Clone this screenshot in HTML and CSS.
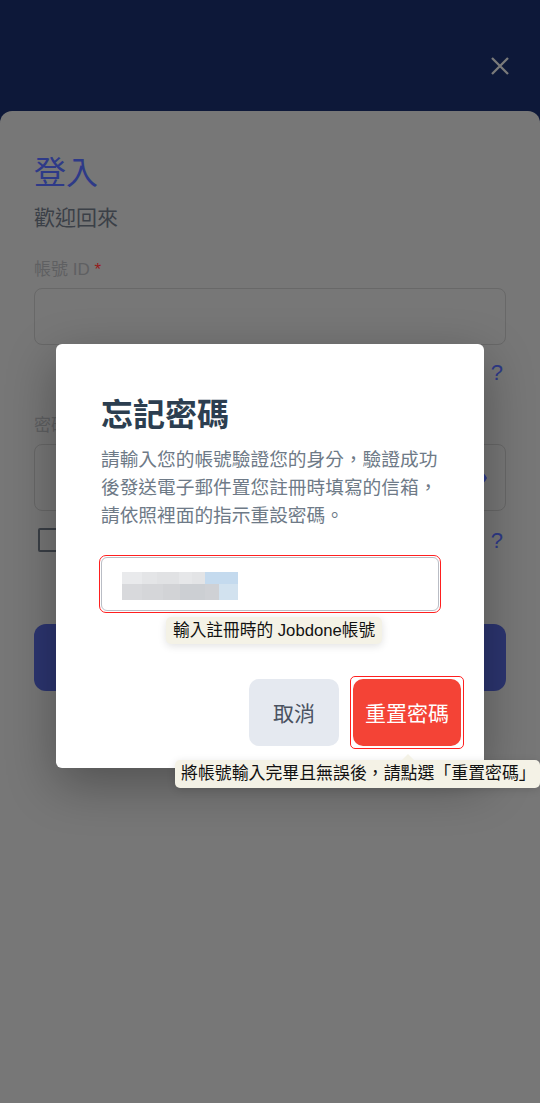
FILE: index.html
```html
<!DOCTYPE html>
<html lang="zh-Hant">
<head>
<meta charset="utf-8">
<title>登入</title>
<link rel="stylesheet" href="styles.css">
</head>
<body>
<div class="page">
  <header class="topbar">
    <button class="close-btn" aria-label="關閉">
      <svg width="18" height="18" viewBox="0 0 18 18"><path d="M1 1L17 17M17 1L1 17" stroke="#7a7a7a" stroke-width="2.3" fill="none"/></svg>
    </button>
  </header>
  <main class="card">
    <h1 class="login-title">登入</h1>
    <p class="welcome">歡迎回來</p>
    <label class="field-label">帳號 ID <span class="req">*</span></label>
    <div class="text-field"></div>
    <div class="link-row"><a class="link"><span class="link-text">忘記帳號</span>?</a></div>
    <label class="field-label pw-label">密碼 <span class="req">*</span></label>
    <div class="text-field pw-field">
      <svg class="eye" width="24" height="24" viewBox="0 0 24 24"><path fill="#2f3b8b" d="M12 4.5C7 4.5 2.730 7.61 1 12c1.73 4.39 6 7.5 11 7.5s9.27-3.11 11-7.5c-1.73-4.39-6-7.5-11-7.5zM12 17c-2.76 0-5-2.240-5-5s2.24-5 5-5 5 2.24 5 5-2.24 5-5 5zm0-8c-1.66 0-3 1.34-3 3s1.34 3 3 3 3-1.34 3-3-1.34-3-3-3z"/></svg>
    </div>
    <div class="remember-row">
      <span class="checkbox"></span>
      <span class="remember-text">記住我</span>
      <a class="link"><span class="link-text">忘記密碼</span>?</a>
    </div>
    <button class="login-btn">登入</button>
  </main>

  <div class="overlay">
    <div class="dialog">
      <h2 class="dialog-title">忘記密碼</h2>
      <p class="dialog-text">請輸入您的帳號驗證您的身分，驗證成功後發送電子郵件置您註冊時填寫的信箱，請依照裡面的指示重設密碼。</p>
      <div class="mark input-mark">
        <div class="dialog-input">
          <div class="mosaic">
            <div class="mosaic-row mosaic-top"></div>
            <div class="mosaic-row mosaic-bottom"></div>
          </div>
        </div>
      </div>
      <div class="dialog-actions">
        <button class="btn-cancel">取消</button>
        <div class="mark btn-mark"><button class="btn-reset">重置密碼</button></div>
      </div>
      <div class="tip tip-input">輸入註冊時的 Jobdone帳號</div>
      <div class="tip tip-reset">將帳號輸入完畢且無誤後，請點選「重置密碼」</div>
    </div>
  </div>
</div>
</body>
</html>
```

FILE: styles.css
```css
* { box-sizing: border-box; }
html, body { margin: 0; padding: 0; }
body {
  width: 540px;
  height: 1103px;
  overflow: hidden;
  font-family: "Liberation Sans", "Noto Sans CJK TC", sans-serif;
  background: #777777;
}
.page {
  position: relative;
  width: 540px;
  height: 1103px;
  display: flex;
  flex-direction: column;
  background: #0d1839;
}
.topbar {
  height: 111px;
  flex: none;
  display: flex;
  justify-content: flex-end;
  align-items: flex-start;
  padding: 57px 31px 0 0;
}
.close-btn {
  border: 0;
  background: none;
  padding: 0;
  width: 18px;
  height: 18px;
  display: block;
}
.close-btn svg { display: block; }

.card {
  flex: 1;
  background: #777777;
  border-radius: 12px 12px 0 0;
  padding: 41.5px 34px 0 34px;
  display: flex;
  flex-direction: column;
}
.login-title {
  margin: 0;
  font-size: 32px;
  line-height: 40px;
  font-weight: 400;
  color: #2e3a88;
}
.welcome {
  margin: 10.5px 0 0;
  font-size: 21px;
  line-height: 30px;
  color: #3b4047;
}
.field-label {
  display: block;
  margin-top: 24.5px;
  font-size: 17px;
  line-height: 24px;
  color: #5f6062;
}
.req { color: #961b1b; }
.text-field {
  margin-top: 6.5px;
  height: 57px;
  border: 1px solid #686868;
  border-radius: 8px;
}
.link-row {
  margin-top: 14px;
  height: 30px;
  display: flex;
  justify-content: flex-end;
  align-items: center;
}
.link {
  font-size: 22px;
  line-height: 30px;
  color: #2e3a88;
  padding-right: 3px;
}
.link-text {
  font-size: 17px;
  margin-right: 12px;
}
.pw-label { margin-top: 24.5px; }
.pw-field {
  height: 67px;
  display: flex;
  justify-content: flex-end;
  align-items: center;
  padding-right: 17px;
}
.eye { display: block; }
.remember-row {
  margin-top: 17px;
  height: 24px;
  display: flex;
  align-items: center;
  padding-left: 4px;
}
.checkbox {
  width: 24px;
  height: 24px;
  border: 2.5px solid #3a3f46;
  border-radius: 2px;
}
.remember-text {
  margin-left: 10px;
  font-size: 17px;
  color: #3b4047;
  flex: 1;
}
.remember-row .link { line-height: 24px; margin-top: 4px; }
.login-btn {
  margin-top: 72px;
  height: 67px;
  border: 0;
  border-radius: 12px;
  background: #2c3570;
  color: #777777;
  font-family: inherit;
  font-size: 21px;
}

.overlay {
  position: absolute;
  inset: 0;
  display: flex;
  justify-content: center;
  align-items: flex-start;
  padding-top: 344px;
}
.dialog {
  position: relative;
  width: 428px;
  background: #ffffff;
  border-radius: 6px;
  padding: 49.2px 20px 19px 43px;
  box-shadow: 0 16px 50px rgba(0, 0, 0, 0.32);
  display: flex;
  flex-direction: column;
}
.dialog-title {
  margin: 0;
  padding-left: 2px;
  font-size: 32px;
  line-height: 44px;
  font-weight: 700;
  color: #2c3e50;
}
.dialog-text {
  margin: 9px 0 0;
  padding-left: 2px;
  width: 342px;
  font-size: 18.7px;
  line-height: 27.7px;
  color: #6e7a87;
}
.mark {
  border: 1px solid #ff1f1f;
}
.input-mark {
  margin-top: 25.7px;
  width: 342px;
  padding: 1px;
  border-radius: 7px;
}
.dialog-input {
  height: 54px;
  border: 1.5px solid #b9bdc5;
  border-radius: 6px;
  padding: 14px 0 0 20px;
}
.mosaic { width: 116px; }
.mosaic-row { height: 12px; }
.mosaic-top {
  background: linear-gradient(to right,
    #e9eaec 0 20px, #e4e5e7 20px 35px, #e1e2e4 35px 57px,
    #e6e7e9 57px 70px, #e3e4e6 70px 83px, #c4daee 83px 116px);
}
.mosaic-bottom {
  height: 16px;
  background: linear-gradient(to right,
    #d8d9dc 0 20px, #d5d6d9 20px 41px, #d2d3d6 41px 58px,
    #cccfd3 58px 83px, #cfd1d5 83px 97px, #d2e2ef 97px 116px);
}
.dialog-actions {
  margin-top: 63px;
  display: flex;
  justify-content: flex-end;
  align-items: center;
  gap: 11px;
}
.btn-cancel, .btn-reset {
  height: 67px;
  border: 0;
  border-radius: 10px;
  font-family: inherit;
  font-size: 21px;
  padding: 0 12px;
}
.btn-cancel {
  min-width: 90px;
  background: #e5e9f0;
  color: #4a5260;
}
.btn-mark {
  padding: 2px;
  border-radius: 5px;
}
.btn-reset {
  display: block;
  min-width: 108px;
  background: #f44336;
  color: #ffffff;
}
.tip {
  position: absolute;
  background: #f4f2e6;
  color: #111111;
  border-radius: 5px;
  white-space: nowrap;
  font-size: 16.7px;
  box-shadow: 0 2px 8px rgba(0, 0, 0, 0.12);
}
.tip-input {
  left: 110px;
  top: 273px;
  height: 27px;
  line-height: 27px;
  padding: 0 7px;
}
.tip-reset {
  left: 119px;
  top: 416px;
  width: 365px;
  height: 28px;
  line-height: 28px;
  padding: 0 6px;
  font-size: 16.9px;
}
.tip-reset::before {
  content: "";
  position: absolute;
  left: 227px;
  top: -6px;
  border-left: 6px solid transparent;
  border-right: 6px solid transparent;
  border-bottom: 6px solid #f4f2e6;
}
```
